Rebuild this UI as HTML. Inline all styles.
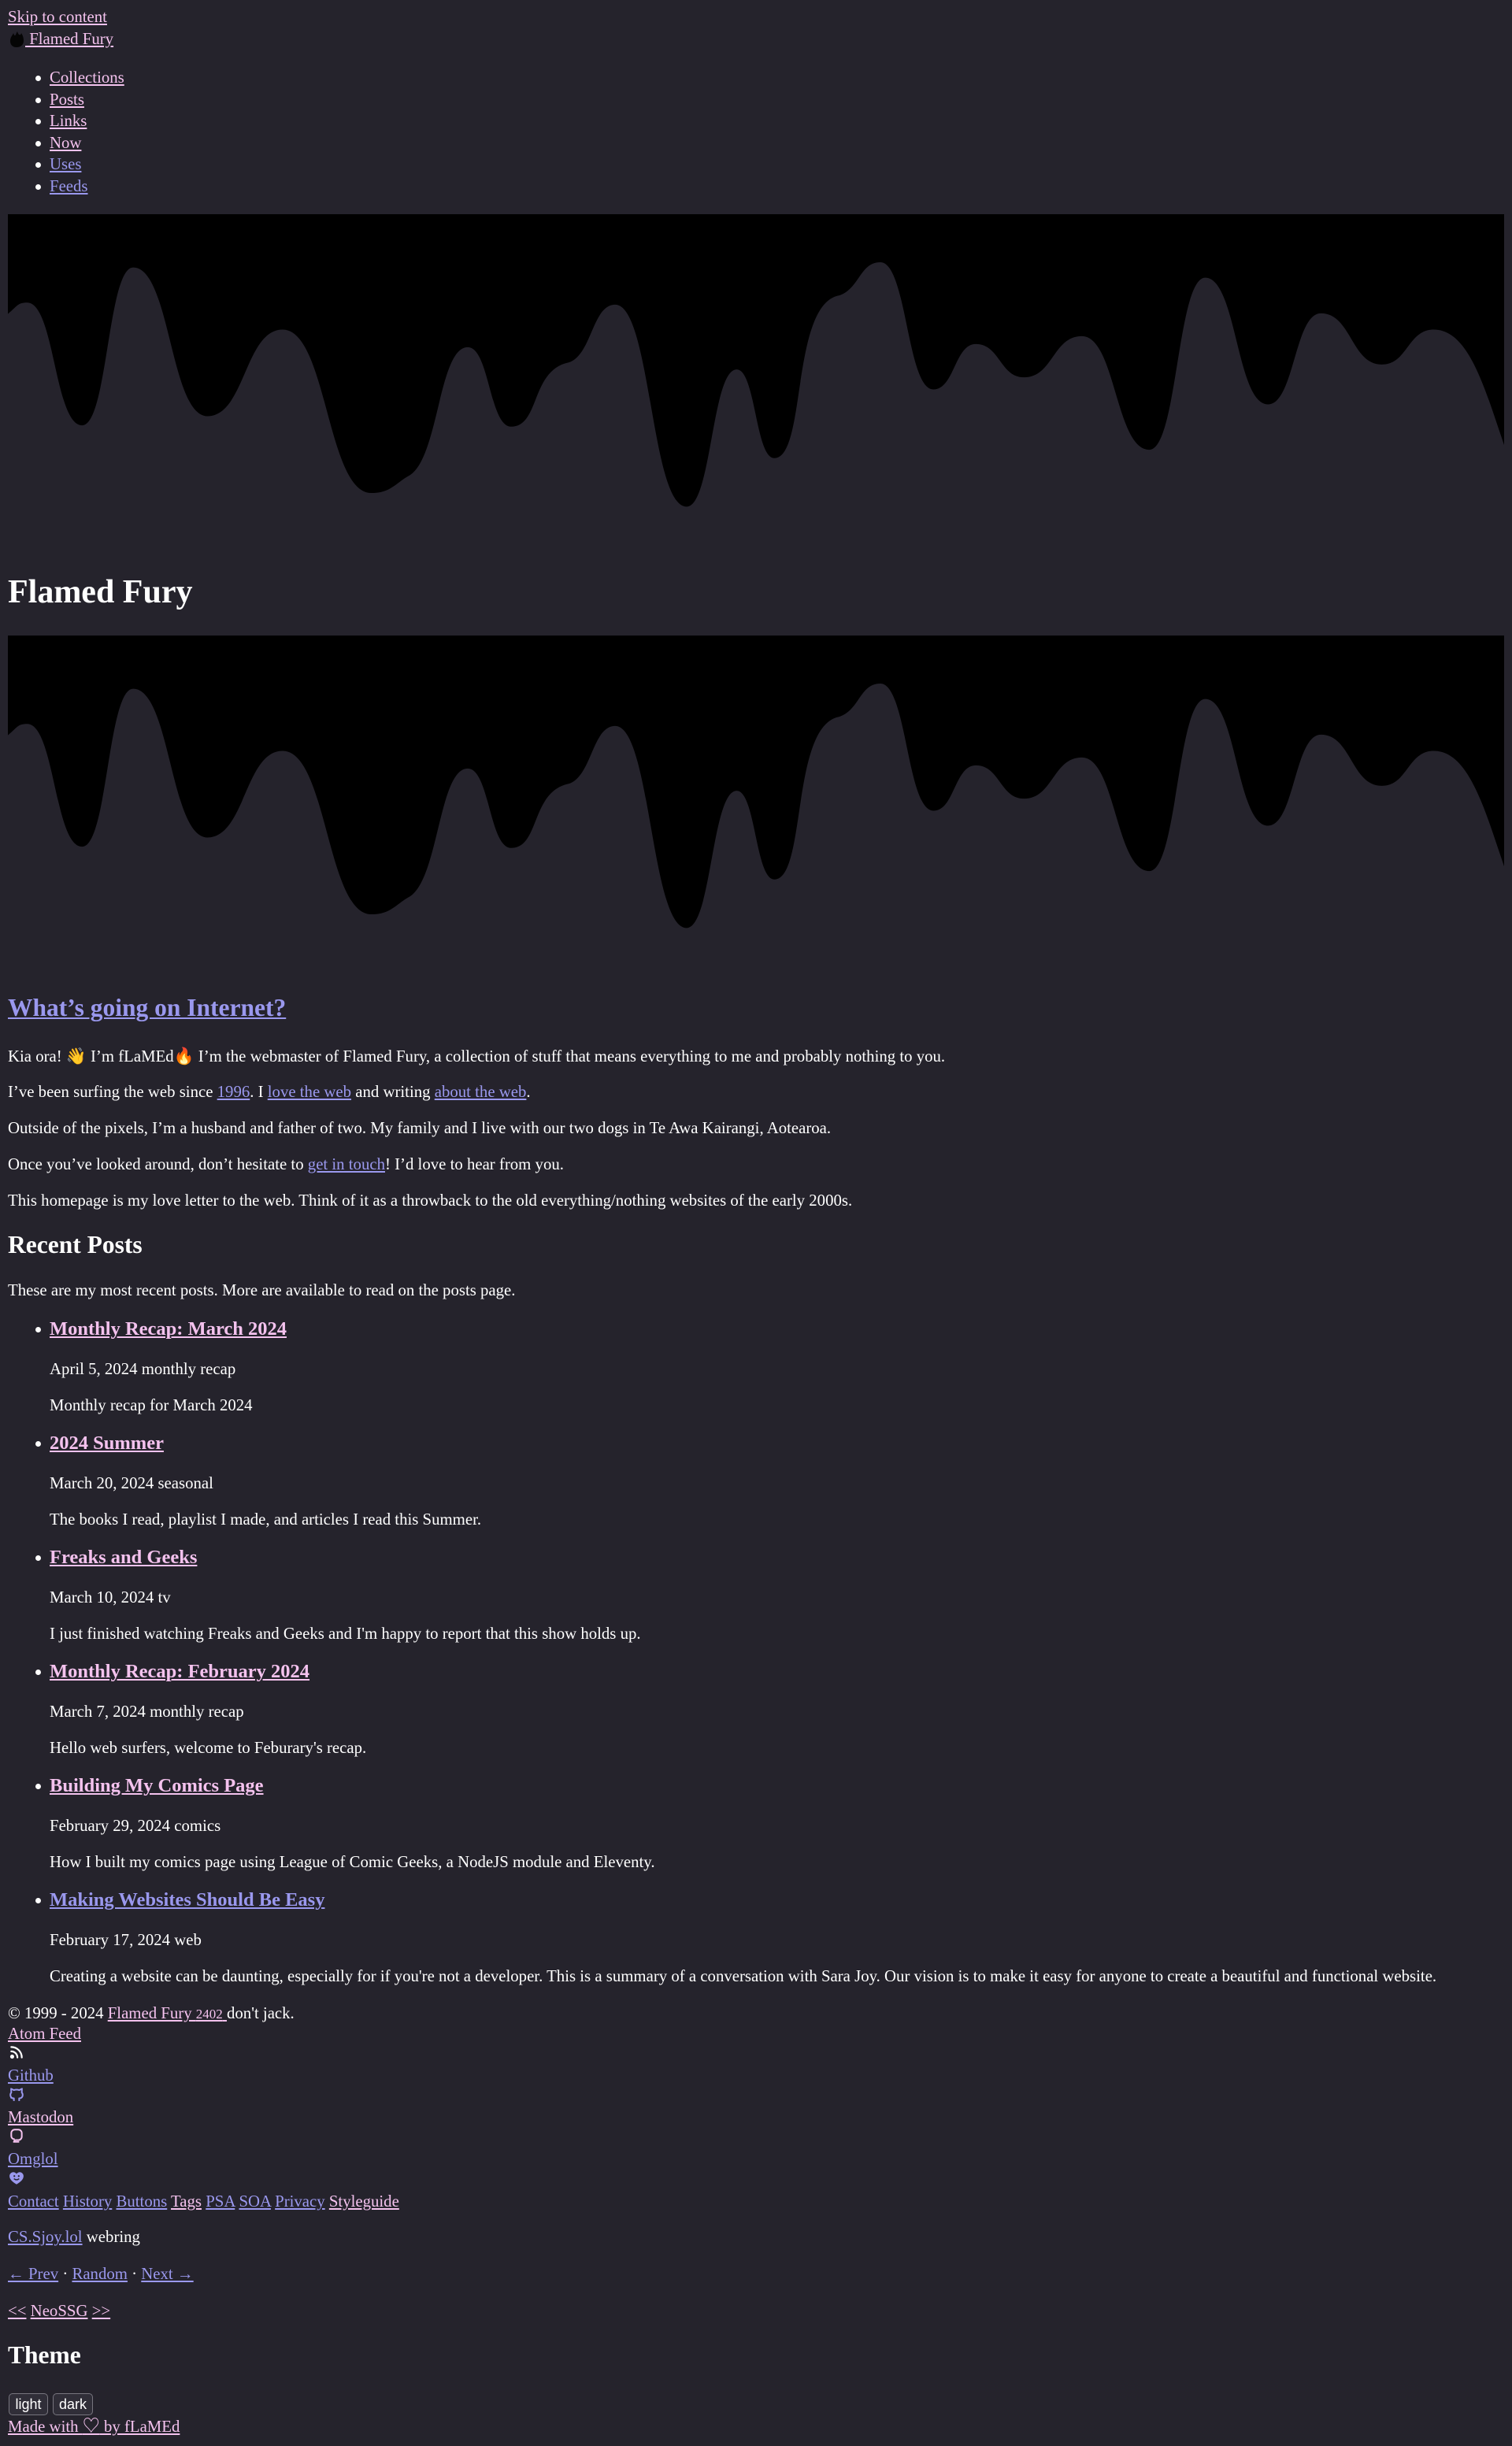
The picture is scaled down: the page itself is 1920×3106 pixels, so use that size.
<!DOCTYPE html>
<html><head><meta charset="utf-8">
<style>
html,body{margin:0;padding:0;background:#25232c;}
body{width:1920px;height:3106px;position:relative;overflow:hidden;font-family:"Liberation Serif","Noto Serif CJK SC",serif;font-size:20.8px;color:#fff;}
.t{position:absolute;left:10px;white-space:nowrap;line-height:30px;height:30px;}
.l{left:63px}
a{text-decoration:underline;text-decoration-thickness:1.5px;text-underline-offset:2px}
.p{color:#f4c2ee}
.b{color:#9a98ee}
.h3{font-weight:bold;font-size:24.5px}
.dot{position:absolute;left:45px;width:7px;height:7px;border-radius:50%;background:#fff}
.wave{position:absolute;left:10px;width:1900px;height:408px;display:block}
.ic{position:absolute;left:11px;width:20px;height:20px}
button{position:absolute;top:3039px;height:28px;font-family:"Liberation Sans",sans-serif;font-size:18px;color:#fff;background:#302e38;border:1.5px solid #77757e;border-radius:5px;padding:0 7px;}
</style></head><body>

<div class="t" style="top:7px"><a class="p">Skip to content</a></div>
<svg style="position:absolute;left:10px;top:39px;width:22px;height:22px" viewBox="0 0 22 22"><path d="M3 13 C3 8 6 6 7 3 C8 6 9 7 10 5 C11 3 11 2 12 1 C13 4 14 6 16 5 C17 4 17 3 17 3 C19 6 20 9 20 13 C20 18 16 21 11 21 C6 21 3 18 3 13Z" fill="#050505"/></svg>
<div class="t" style="top:35px;left:32px"><a class="p">&nbsp;Flamed Fury</a></div>

<div class="dot" style="top:96px"></div><div class="t l" style="top:84px"><a class="p">Collections</a></div>
<div class="dot" style="top:124px"></div><div class="t l" style="top:112px"><a class="p">Posts</a></div>
<div class="dot" style="top:151px"></div><div class="t l" style="top:139px"><a class="p">Links</a></div>
<div class="dot" style="top:179px"></div><div class="t l" style="top:167px"><a class="p">Now</a></div>
<div class="dot" style="top:206px"></div><div class="t l" style="top:194px"><a class="b">Uses</a></div>
<div class="dot" style="top:234px"></div><div class="t l" style="top:222px"><a class="b">Feeds</a></div>

<svg class="wave" style="top:272px" viewBox="8 35 1552 1225" preserveAspectRatio="none">
<rect x="8" y="35" width="1552" height="1225" fill="#000"/>
<path fill="#25232c" d="M8,415 C18,385 18,372 28,372 C56.5,372 56.5,840 85,840 C111.5,840 111.5,238 138,238 C176.5,238 176.5,805 215,805 C254,805 254,475 293,475 C339,475 339,1098 385,1098 C405,1098 410,1060 425,1030 C455,960 455,542 485,542 C507.5,542 507.5,845 530,845 C560,845 550,630 590,600 C614,570 614,380 638,380 C675,380 675,1150 712,1150 C738,1150 738,627 764,627 C783.5,627 783.5,965 803,965 C836.5,965 820,380 870,345 C891.5,320 891.5,218 913,218 C940.5,218 940.5,703 968,703 C990,703 990,530 1012,530 C1037,530 1037,657 1062,657 C1092,657 1092,500 1122,500 C1157,500 1157,933 1192,933 C1221,933 1221,277 1250,277 C1282.5,277 1282.5,760 1315,760 C1342.5,760 1342.5,413 1370,413 C1401.5,413 1401.5,608 1433,608 C1460,608 1460,475 1487,475 C1523.5,475 1540,700 1560,915 L1560,1260 L8,1260 Z"/>
</svg>

<div class="t" style="top:727px;height:50px;line-height:50px;font-size:42px;font-weight:bold">Flamed Fury</div>

<svg class="wave" style="top:807px" viewBox="8 35 1552 1225" preserveAspectRatio="none">
<rect x="8" y="35" width="1552" height="1225" fill="#000"/>
<path fill="#25232c" d="M8,415 C18,385 18,372 28,372 C56.5,372 56.5,840 85,840 C111.5,840 111.5,238 138,238 C176.5,238 176.5,805 215,805 C254,805 254,475 293,475 C339,475 339,1098 385,1098 C405,1098 410,1060 425,1030 C455,960 455,542 485,542 C507.5,542 507.5,845 530,845 C560,845 550,630 590,600 C614,570 614,380 638,380 C675,380 675,1150 712,1150 C738,1150 738,627 764,627 C783.5,627 783.5,965 803,965 C836.5,965 820,380 870,345 C891.5,320 891.5,218 913,218 C940.5,218 940.5,703 968,703 C990,703 990,530 1012,530 C1037,530 1037,657 1062,657 C1092,657 1092,500 1122,500 C1157,500 1157,933 1192,933 C1221,933 1221,277 1250,277 C1282.5,277 1282.5,760 1315,760 C1342.5,760 1342.5,413 1370,413 C1401.5,413 1401.5,608 1433,608 C1460,608 1460,475 1487,475 C1523.5,475 1540,700 1560,915 L1560,1260 L8,1260 Z"/>
</svg>

<div class="t" style="top:1260px;height:40px;line-height:40px;font-size:31.5px;font-weight:bold"><a class="b">What’s going on Internet?</a></div>
<div class="t" style="top:1327px">Kia ora! 👋 I’m fLaMEd🔥 I’m the webmaster of Flamed Fury, a collection of stuff that means everything to me and probably nothing to you.</div>
<div class="t" style="top:1372px">I’ve been surfing the web since <a class="b">1996</a>. I <a class="b">love the web</a> and writing <a class="b">about the web</a>.</div>
<div class="t" style="top:1418px">Outside of the pixels, I’m a husband and father of two. My family and I live with our two dogs in Te Awa Kairangi, Aotearoa.</div>
<div class="t" style="top:1464px">Once you’ve looked around, don’t hesitate to <a class="b">get in touch</a>! I’d love to hear from you.</div>
<div class="t" style="top:1510px">This homepage is my love letter to the web. Think of it as a throwback to the old everything/nothing websites of the early 2000s.</div>

<div class="t" style="top:1561px;height:40px;line-height:40px;font-size:31.5px;font-weight:bold">Recent Posts</div>
<div class="t" style="top:1624px">These are my most recent posts. More are available to read on the posts page.</div>

<div class="dot" style="top:1685px"></div><div class="t l h3" style="top:1673px"><a class="p">Monthly Recap: March 2024</a></div>
<div class="t l" style="top:1724px">April 5, 2024 monthly recap</div>
<div class="t l" style="top:1770px">Monthly recap for March 2024</div>

<div class="dot" style="top:1830px"></div><div class="t l h3" style="top:1818px"><a class="p">2024 Summer</a></div>
<div class="t l" style="top:1869px">March 20, 2024 seasonal</div>
<div class="t l" style="top:1915px">The books I read, playlist I made, and articles I read this Summer.</div>

<div class="dot" style="top:1975px"></div><div class="t l h3" style="top:1963px"><a class="p">Freaks and Geeks</a></div>
<div class="t l" style="top:2014px">March 10, 2024 tv</div>
<div class="t l" style="top:2060px">I just finished watching Freaks and Geeks and I'm happy to report that this show holds up.</div>

<div class="dot" style="top:2120px"></div><div class="t l h3" style="top:2108px"><a class="p">Monthly Recap: February 2024</a></div>
<div class="t l" style="top:2159px">March 7, 2024 monthly recap</div>
<div class="t l" style="top:2205px">Hello web surfers, welcome to Feburary's recap.</div>

<div class="dot" style="top:2265px"></div><div class="t l h3" style="top:2253px"><a class="p">Building My Comics Page</a></div>
<div class="t l" style="top:2304px">February 29, 2024 comics</div>
<div class="t l" style="top:2350px">How I built my comics page using League of Comic Geeks, a NodeJS module and Eleventy.</div>

<div class="dot" style="top:2410px"></div><div class="t l h3" style="top:2398px"><a class="b">Making Websites Should Be Easy</a></div>
<div class="t l" style="top:2449px">February 17, 2024 web</div>
<div class="t l" style="top:2495px">Creating a website can be daunting, especially for if you're not a developer. This is a summary of a conversation with Sara Joy. Our vision is to make it easy for anyone to create a beautiful and functional website.</div>

<div class="t" style="top:2542px">© 1999 - 2024 <a class="p">Flamed Fury <small style="font-size:17px">2402</small> </a>don't jack.</div>
<div class="t" style="top:2568px"><a class="p">Atom Feed</a></div>
<svg class="ic" style="top:2596px" viewBox="0 0 18 18" fill="none" stroke="#fff" stroke-width="2" stroke-linecap="round"><path d="M3 8a7 7 0 0 1 7 7"/><path d="M3 3a12 12 0 0 1 12 12"/><circle cx="4" cy="14" r="1.3" fill="#fff"/></svg>
<div class="t" style="top:2621px"><a class="b">Github</a></div>
<svg class="ic" style="top:2649px" viewBox="0 0 18 18" fill="none" stroke="#9a98ee" stroke-width="1.8" stroke-linejoin="round"><path d="M6 17v-3c-2 0-4-1-4-4 0-1 .3-2 1-2.6L2.8 3 6 4.6a9 9 0 0 1 6 0L15.2 3 15 7.4c.7.6 1 1.6 1 2.6 0 3-2 4-4 4v3"/><path d="M2 13c1 0 2 1 3 1"/></svg>
<div class="t" style="top:2674px"><a class="p">Mastodon</a></div>
<svg class="ic" style="top:2702px" viewBox="0 0 18 18" fill="none" stroke="#f4c2ee" stroke-width="1.8"><path d="M3 9V6a4 4 0 0 1 4-4h4a4 4 0 0 1 4 4v4a4 4 0 0 1-4 4H8c-1 0-2 1-2 2h6"/><path d="M3 9c0 3 2 4 4 4"/></svg>
<div class="t" style="top:2727px"><a class="b">Omglol</a></div>
<svg class="ic" style="top:2756px" viewBox="0 0 18 18"><path d="M9 16C4 13 1 10 1 6.5 1 4 3 2 5.5 2 7 2 8.2 3 9 4 9.8 3 11 2 12.5 2 15 2 17 4 17 6.5 17 10 14 13 9 16Z" fill="#9a98ee"/><circle cx="6.5" cy="6.5" r="1" fill="#25232c"/><circle cx="11.5" cy="6.5" r="1" fill="#25232c"/><path d="M6 9.5q3 2.5 6 0" stroke="#25232c" stroke-width="1.2" fill="none"/></svg>
<div class="t" style="top:2781px"><a class="b">Contact</a> <a class="b">History</a> <a class="b">Buttons</a> <a class="p">Tags</a> <a class="b">PSA</a> <a class="b">SOA</a> <a class="b">Privacy</a> <a class="p">Styleguide</a></div>
<div class="t" style="top:2826px"><a class="b">CS.Sjoy.lol</a> webring</div>
<div class="t" style="top:2873px"><a class="b">← Prev</a> · <a class="b">Random</a> · <a class="b">Next →</a></div>
<div class="t" style="top:2920px"><a class="p">&lt;&lt;</a> <a class="p">NeoSSG</a> <a class="p">&gt;&gt;</a></div>
<div class="t" style="top:2971px;height:40px;line-height:40px;font-size:31.5px;font-weight:bold">Theme</div>
<button style="left:11px;width:50px">light</button>
<button style="left:67px;width:51px">dark</button>
<div class="t" style="top:3066px"><a class="p">Made with <span style="font-size:22px">♡</span> by fLaMEd</a></div>

</body></html>
